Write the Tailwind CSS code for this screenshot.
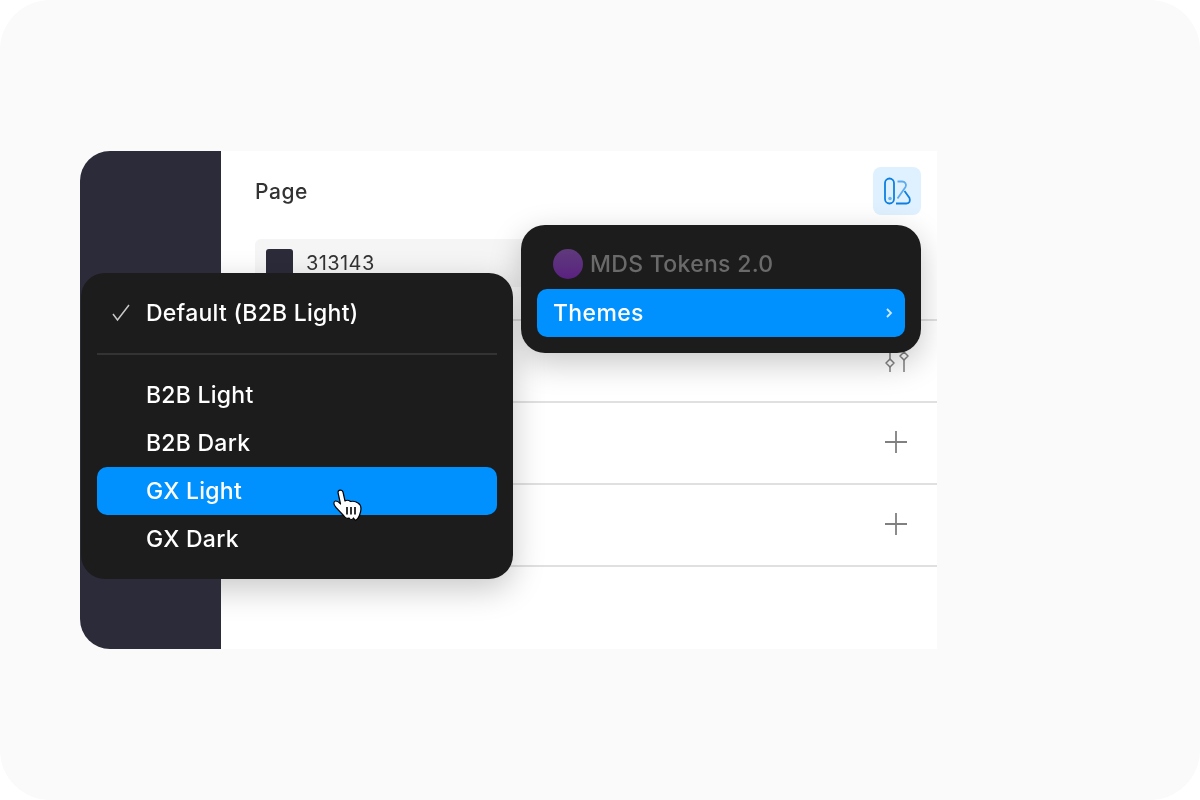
<!DOCTYPE html>
<html>
<head>
<meta charset="utf-8">
<script src="https://cdn.jsdelivr.net/npm/@tailwindcss/browser@4"></script>
</head>
<body class="bg-white">
<div class="relative w-[1200px] h-[800px] rounded-[50px] bg-[#fafafa] overflow-hidden font-['Inter',sans-serif] pt-[151px] pl-[80px]">
  <div class="relative isolate flex w-[857px] h-[498px] bg-white rounded-l-[30px] overflow-hidden">
    <div class="relative z-10 w-[141px] bg-[#2c2b3a]"></div>
    <div class="flex-1 flex flex-col">
      <div class="flex items-start justify-between pl-[34px] pr-[16px] pt-[16px] h-[88px]">
        <span class="text-[21px] leading-[48px] font-medium tracking-[0.6px] text-[#333] h-[48px] pt-[1px] blur-[0.3px]">Page</span>
        <div class="w-[48px] h-[48px] rounded-[8px] bg-[#dff1ff] flex items-center justify-center">
          <svg width="30" height="30" viewBox="0 0 30 30" fill="none" stroke="#0d7fe0" stroke-width="1.800"><rect x="3" y="2.500" width="9" height="25" rx="4.500"/><circle cx="8" cy="22.500" r="1.800" fill="#6bb5f2" stroke="none"/><path d="M15.500 5.500h4.500c3 0 5 3 3.500 5.500L15.500 22.500" stroke="#5cabef"/><path d="M22.500 15l5 7c1 3 0 5.500-3 5.500H14"/></svg>
        </div>
      </div>
      <div class="h-[82px] border-b-2 border-[#e0e0e0] pl-[34px]">
        <div class="w-[400px] h-[48px] rounded-[6px] bg-[#f5f5f5] flex items-start gap-[13px] pl-[11px] pt-[10px]">
          <div class="w-[27px] h-[28px] rounded-[3px] bg-[#2c2b3a]"></div>
          <span class="text-[20px] leading-[28px] tracking-[0.4px] text-[#333] blur-[0.3px]">313143</span>
        </div>
      </div>
      <div class="h-[82px] border-b-2 border-[#e0e0e0] flex justify-end items-center pr-[27px]">
        <svg width="26" height="24" viewBox="0 0 26 24" fill="none" stroke="#808080" stroke-width="1.500"><path d="M6 0v10.500M6 17.500V23M20 0v3.500M20 10.500V23"/><path d="M6 10l4 4-4 4-4-4zM20 3l4 4-4 4-4-4z" stroke-linejoin="round"/></svg>
      </div>
      <div class="h-[82px] border-b-2 border-[#e0e0e0] flex justify-end items-center pr-[30px] pb-[2px]">
        <svg width="22" height="22" viewBox="0 0 22 22" stroke="#808080" stroke-width="1.800"><path d="M11 0v22M0 11h22"/></svg>
      </div>
      <div class="h-[82px] border-b-2 border-[#e0e0e0] flex justify-end items-center pr-[30px] pb-[2px]">
        <svg width="22" height="22" viewBox="0 0 22 22" stroke="#808080" stroke-width="1.800"><path d="M11 0v22M0 11h22"/></svg>
      </div>
    </div>
    <div class="absolute left-[441px] top-[74px] w-[400px] h-[128px] rounded-[24px] shadow-[0_10px_32px_rgba(0,0,0,0.22)]"></div>
    <div class="absolute left-[1px] top-[122px] w-[432px] h-[306px] rounded-[24px] shadow-[0_10px_32px_rgba(0,0,0,0.22)]"></div>
  </div>

  <div class="absolute left-[521px] top-[225px] w-[400px] h-[128px] rounded-[24px] bg-[#1c1c1c] px-[16px] pt-[24px]">
    <div class="flex items-center h-[30px] pl-[16px] gap-[7px] mb-[10px]">
      <div class="w-[30px] h-[30px] rounded-full bg-linear-to-b from-[#5f3a7c] to-[#5a2080] blur-[0.5px]"></div>
      <span class="text-[23px] text-[#6a6a6a] font-medium tracking-[0.3px] mt-[1px] blur-[0.3px]">MDS Tokens 2.0</span>
    </div>
    <div class="flex items-center justify-between h-[48px] rounded-[10px] bg-[#0091ff] pl-[16px] pr-[12px] text-white">
      <span class="text-[23px] font-medium tracking-[0.35px] blur-[0.3px]">Themes</span>
      <svg width="8" height="10" viewBox="0 0 8 10" fill="none" stroke="#cfe9ff" stroke-width="1.800"><path d="M2 1l4 4-4 4"/></svg>
    </div>
  </div>

  <div class="absolute left-[81px] top-[273px] w-[432px] h-[306px] rounded-[24px] bg-[#1c1c1c] px-[16px] pt-[16px] text-white text-[23px] font-medium tracking-[0.25px]">
    <div class="h-[48px] flex items-center pl-[14px]">
      <svg width="20" height="18" viewBox="0 0 20 18" fill="none" stroke="#c8c8c8" stroke-width="1.500" class="mr-[15px]"><path d="M2 10l4.500 6L18 1"/></svg>
      <span class="blur-[0.3px]">Default (B2B Light)</span>
    </div>
    <div class="h-[2px] bg-[#333] mt-[16px] mb-[16px]"></div>
    <div class="h-[48px] flex items-center pl-[49px]"><span class="blur-[0.3px]">B2B Light</span></div>
    <div class="h-[48px] flex items-center pl-[49px]"><span class="blur-[0.3px]">B2B Dark</span></div>
    <div class="h-[48px] flex items-center pl-[49px] bg-[#0091ff] rounded-[10px]"><span class="blur-[0.3px]">GX Light</span></div>
    <div class="h-[48px] flex items-center pl-[49px]"><span class="blur-[0.3px]">GX Dark</span></div>
  </div>

  <svg class="absolute left-[332px] top-[487px]" width="32" height="36" viewBox="0 0 32 36">
    <path d="M6 5.500C6 2.500 10 2.500 11 5l2 9c1.500-1 3.500-1 5.500.500 2.500-.5 5.500 0 7.500 1.500 2.500 1.500 3.500 5 2.500 9-1 4-2.500 7-4.500 8-1.500.5-2 -1-2.500-2-1 2-3.500 2-4.500 0-1.500 1-3.500 0-5-2L4 20.500C1 17 1.500 14.500 3.500 14c2-.2 3.500 1 5 3z" fill="#fff" stroke="#000" stroke-width="1.200" stroke-linejoin="round"/>
    <path d="M15 20v7.500M19 20v7.500M23 20v7.500" stroke="#000" stroke-width="1.600"/>
  </svg>
</div>
</body>
</html>
